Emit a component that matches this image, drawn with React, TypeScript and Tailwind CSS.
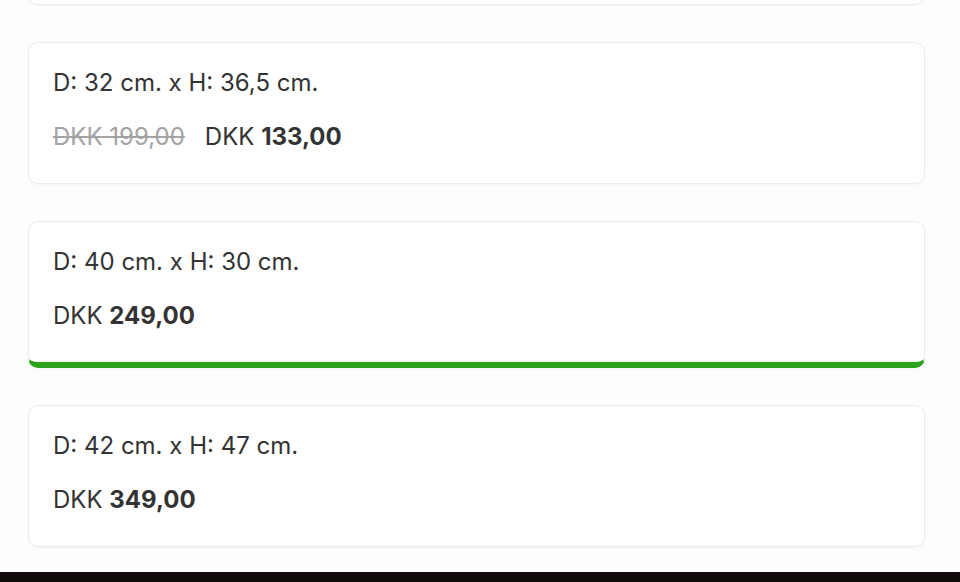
import React from 'react';

type Variant = {
  size: string;
  oldPrice?: string;
  price: string;
  selected?: boolean;
};

const variants: Variant[] = [
  { size: 'D: 32 cm. x H: 36,5 cm.', oldPrice: '199,00', price: '133,00' },
  { size: 'D: 40 cm. x H: 30 cm.', price: '249,00', selected: true },
  { size: 'D: 42 cm. x H: 47 cm.', price: '349,00' },
];

function VariantCard({ v }: { v: Variant }) {
  return (
    <div
      className={
        'rounded-[10px] border border-[#ececec] bg-white shadow-[0_1px_3px_rgba(0,0,0,0.04)] px-6 pt-[25px] ' +
        (v.selected ? 'h-[147px] border-b-[6px] border-b-[#2aa31a]' : 'h-[142px]')
      }
    >
      <div className="text-[24px] leading-[30px] text-[#333]">{v.size}</div>
      <div className="mt-[24px] flex items-center gap-5 text-[24px] leading-[30px] text-[#333]">
        {v.oldPrice && <span className="text-[#a3a3a3] line-through">DKK {v.oldPrice}</span>}
        <span>
          DKK <span className="font-bold">{v.price}</span>
        </span>
      </div>
    </div>
  );
}

export default function App() {
  return (
    <div className="h-[582px] overflow-hidden bg-[#fdfdfd] flex flex-col" style={{ fontFamily: 'Inter, "Open Sans", sans-serif' }}>
      <div className="flex flex-col gap-[37px] px-[28px] pr-[35px]">
        <div className="-mt-[137px] h-[142px] rounded-[10px] border border-[#ececec] bg-white shadow-[0_1px_3px_rgba(0,0,0,0.04)]" />
        {variants.map(v => (
          <VariantCard key={v.size} v={v} />
        ))}
      </div>
      <div className="flex-1" />
      <div className="h-[10px] bg-[#120d0a]" />
    </div>
  );
}
